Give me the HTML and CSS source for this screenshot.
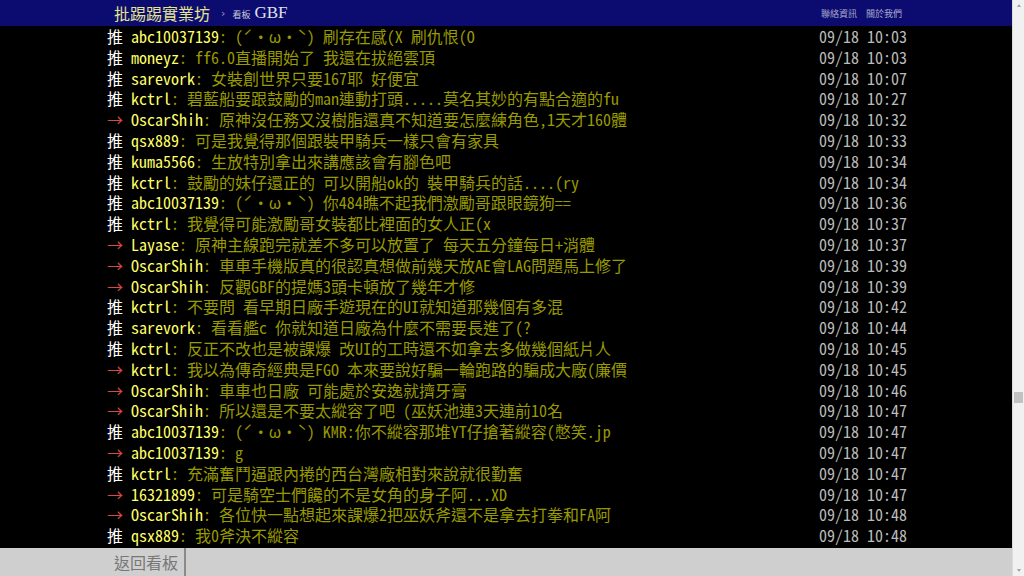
FILE: index.html
```html
<!doctype html>
<html lang="zh-Hant">
  <head>
    <meta charset="UTF-8" />
    <meta name="viewport" content="width=device-width, initial-scale=1.0" />
    <title>[閒聊] GBF - 看板 GBF - 批踢踢實業坊</title>
    <link rel="stylesheet" href="styles.css">
  </head>
  <body>
    <div class="window">
      <div class="page">
        <div class="topbar">
          <div class="topbar-inner">
            <a class="logo">批踢踢實業坊</a>
            <span class="sep">›</span>
            <a class="board"><span class="board-label">看板</span>GBF</a>
            <div class="right">
              <a>聯絡資訊</a>
              <a>關於我們</a>
            </div>
          </div>
        </div>

        <div class="main">
          <div class="bbs-screen">
            <div class="push"><span class="push-tag">推 </span><span class="push-userid">abc10037139</span><span class="push-content">: (ˊ・ω・ˋ) 刷存在感(X 刷仇恨(O</span><span class="push-ipdatetime">09/18 10:03</span></div>
            <div class="push"><span class="push-tag">推 </span><span class="push-userid">moneyz</span><span class="push-content">: ff6.0直播開始了 我還在拔絕雲頂</span><span class="push-ipdatetime">09/18 10:03</span></div>
            <div class="push"><span class="push-tag">推 </span><span class="push-userid">sarevork</span><span class="push-content">: 女裝創世界只要167耶 好便宜</span><span class="push-ipdatetime">09/18 10:07</span></div>
            <div class="push"><span class="push-tag">推 </span><span class="push-userid">kctrl</span><span class="push-content">: 碧藍船要跟鼓勵的man連動打頭.....莫名其妙的有點合適的fu</span><span class="push-ipdatetime">09/18 10:27</span></div>
            <div class="push"><span class="push-tag arrow">→ </span><span class="push-userid">OscarShih</span><span class="push-content">: 原神沒任務又沒樹脂還真不知道要怎麼練角色,1天才160體</span><span class="push-ipdatetime">09/18 10:32</span></div>
            <div class="push"><span class="push-tag">推 </span><span class="push-userid">qsx889</span><span class="push-content">: 可是我覺得那個跟裝甲騎兵一樣只會有家具</span><span class="push-ipdatetime">09/18 10:33</span></div>
            <div class="push"><span class="push-tag">推 </span><span class="push-userid">kuma5566</span><span class="push-content">: 生放特別拿出來講應該會有腳色吧</span><span class="push-ipdatetime">09/18 10:34</span></div>
            <div class="push"><span class="push-tag">推 </span><span class="push-userid">kctrl</span><span class="push-content">: 鼓勵的妹仔還正的 可以開船ok的 裝甲騎兵的話....(ry</span><span class="push-ipdatetime">09/18 10:34</span></div>
            <div class="push"><span class="push-tag">推 </span><span class="push-userid">abc10037139</span><span class="push-content">: (ˊ・ω・ˋ) 你484瞧不起我們激勵哥跟眼鏡狗==</span><span class="push-ipdatetime">09/18 10:36</span></div>
            <div class="push"><span class="push-tag">推 </span><span class="push-userid">kctrl</span><span class="push-content">: 我覺得可能激勵哥女裝都比裡面的女人正(x</span><span class="push-ipdatetime">09/18 10:37</span></div>
            <div class="push"><span class="push-tag arrow">→ </span><span class="push-userid">Layase</span><span class="push-content">: 原神主線跑完就差不多可以放置了 每天五分鐘每日+消體</span><span class="push-ipdatetime">09/18 10:37</span></div>
            <div class="push"><span class="push-tag arrow">→ </span><span class="push-userid">OscarShih</span><span class="push-content">: 車車手機版真的很認真想做前幾天放AE會LAG問題馬上修了</span><span class="push-ipdatetime">09/18 10:39</span></div>
            <div class="push"><span class="push-tag arrow">→ </span><span class="push-userid">OscarShih</span><span class="push-content">: 反觀GBF的提媽3頭卡頓放了幾年才修</span><span class="push-ipdatetime">09/18 10:39</span></div>
            <div class="push"><span class="push-tag">推 </span><span class="push-userid">kctrl</span><span class="push-content">: 不要問 看早期日廠手遊現在的UI就知道那幾個有多混</span><span class="push-ipdatetime">09/18 10:42</span></div>
            <div class="push"><span class="push-tag">推 </span><span class="push-userid">sarevork</span><span class="push-content">: 看看艦c 你就知道日廠為什麼不需要長進了(?</span><span class="push-ipdatetime">09/18 10:44</span></div>
            <div class="push"><span class="push-tag">推 </span><span class="push-userid">kctrl</span><span class="push-content">: 反正不改也是被課爆 改UI的工時還不如拿去多做幾個紙片人</span><span class="push-ipdatetime">09/18 10:45</span></div>
            <div class="push"><span class="push-tag arrow">→ </span><span class="push-userid">kctrl</span><span class="push-content">: 我以為傳奇經典是FGO 本來要說好騙一輪跑路的騙成大廠(廉價</span><span class="push-ipdatetime">09/18 10:45</span></div>
            <div class="push"><span class="push-tag arrow">→ </span><span class="push-userid">OscarShih</span><span class="push-content">: 車車也日廠 可能處於安逸就擠牙膏</span><span class="push-ipdatetime">09/18 10:46</span></div>
            <div class="push"><span class="push-tag arrow">→ </span><span class="push-userid">OscarShih</span><span class="push-content">: 所以還是不要太縱容了吧 (巫妖池連3天連前10名</span><span class="push-ipdatetime">09/18 10:47</span></div>
            <div class="push"><span class="push-tag">推 </span><span class="push-userid">abc10037139</span><span class="push-content">: (ˊ・ω・ˋ) KMR:你不縱容那堆YT仔搶著縱容(憋笑.jp</span><span class="push-ipdatetime">09/18 10:47</span></div>
            <div class="push"><span class="push-tag arrow">→ </span><span class="push-userid">abc10037139</span><span class="push-content">: g</span><span class="push-ipdatetime">09/18 10:47</span></div>
            <div class="push"><span class="push-tag">推 </span><span class="push-userid">kctrl</span><span class="push-content">: 充滿奮鬥逼跟內捲的西台灣廠相對來說就很勤奮</span><span class="push-ipdatetime">09/18 10:47</span></div>
            <div class="push"><span class="push-tag arrow">→ </span><span class="push-userid">16321899</span><span class="push-content">: 可是騎空士們饞的不是女角的身子阿...XD</span><span class="push-ipdatetime">09/18 10:47</span></div>
            <div class="push"><span class="push-tag arrow">→ </span><span class="push-userid">OscarShih</span><span class="push-content">: 各位快一點想起來課爆2把巫妖斧還不是拿去打拳和FA阿</span><span class="push-ipdatetime">09/18 10:48</span></div>
            <div class="push"><span class="push-tag">推 </span><span class="push-userid">qsx889</span><span class="push-content">: 我0斧決不縱容</span><span class="push-ipdatetime">09/18 10:48</span></div>
          </div>
        </div>

        <div class="navigation">
          <div class="navigation-inner">
            <a class="btn-back">返回看板</a>
          </div>
        </div>
      </div>

      <!-- 捲軸 -->
      <div class="scrollbar">
        <div class="scroll-btn"><span class="arrow-up"></span></div>
        <div class="scroll-track"><div class="scroll-thumb"></div></div>
        <div class="scroll-btn"><span class="arrow-down"></span></div>
      </div>
    </div>
  </body>
</html>
```

FILE: styles.css
```css
html,
body {
  margin: 0;
  height: 100%;
  overflow: hidden;
  background: #000;
}

body {
  font-family: "Noto Sans Mono CJK TC", "Noto Sans CJK TC", monospace;
  color: #bbb;
}

a {
  text-decoration: none;
}

.window {
  display: flex;
  height: 576px;
}

.page {
  flex: 1;
  min-width: 0;
  display: flex;
  flex-direction: column;
}

/* 上方選單 */
.topbar {
  height: 26px;
  flex-shrink: 0;
  background-color: #0c0c70;
}

.topbar-inner {
  width: 800px;
  height: 100%;
  margin: 0 auto;
  padding: 0 4px 0 8px;
  box-sizing: border-box;
  display: flex;
  align-items: center;
}

.logo {
  font-family: "Noto Sans CJK TC", sans-serif;
  font-size: 16px;
  color: #e4e48c;
  line-height: 26px;
}

.sep {
  font-family: "DejaVu Sans", sans-serif;
  font-size: 11px;
  color: #9a9ab8;
  margin: 0 7px 0 11px;
}

.board {
  font-family: "Liberation Serif", serif;
  font-size: 17px;
  color: #e0e0e8;
}

.board-label {
  font-family: "Noto Sans CJK TC", sans-serif;
  font-size: 9px;
  color: #c8c8d8;
  margin-right: 4px;
}

.right {
  margin-left: auto;
  display: flex;
  gap: 9px;
}

.right a {
  font-family: "Noto Sans CJK TC", sans-serif;
  font-size: 9px;
  color: #a8a8cc;
}

/* 推文 */
.main {
  flex: 1;
  overflow: hidden;
}

.bbs-screen {
  width: 800px;
  margin: 0 auto;
  padding-left: 2px;
}

.push {
  font-size: 16px;
  height: 20.8px;
  line-height: 20.8px;
  white-space: pre;
}

.push-tag {
  color: #fff;
}

.push-tag.arrow {
  color: #d84848;
}

.push-userid {
  color: #ff6;
}

.push-content {
  color: #990;
}

.push-ipdatetime {
  float: right;
  color: #bbb;
}

/* 下方按鈕列 */
.navigation {
  height: 28px;
  flex-shrink: 0;
  background: #cfcfcf;
}

.navigation-inner {
  width: 800px;
  height: 100%;
  margin: 0 auto;
  padding-left: 2px;
  display: flex;
}

.btn-back {
  font-family: "Noto Sans CJK TC", sans-serif;
  font-size: 16px;
  line-height: 28px;
  color: #777;
  padding: 0 6px 0 7px;
  border-right: 2px solid #8a8a8a;
}

/* 捲軸 */
.scrollbar {
  width: 11px;
  border-left: 1px solid #dcdcdc;
  background: #f1f1f1;
  display: flex;
  flex-direction: column;
}

.scroll-btn {
  height: 11px;
  display: flex;
  justify-content: center;
  align-items: center;
}

.arrow-up,
.arrow-down {
  width: 0;
  height: 0;
  border-left: 2.5px solid transparent;
  border-right: 2.5px solid transparent;
}

.arrow-up {
  border-bottom: 3px solid #a3a3a3;
}

.arrow-down {
  border-top: 3px solid #a3a3a3;
}

.scroll-track {
  flex: 1;
  padding: 0 1px;
}

.scroll-thumb {
  height: 11px;
  margin-top: 381px;
  background: #c1c1c1;
}
```
